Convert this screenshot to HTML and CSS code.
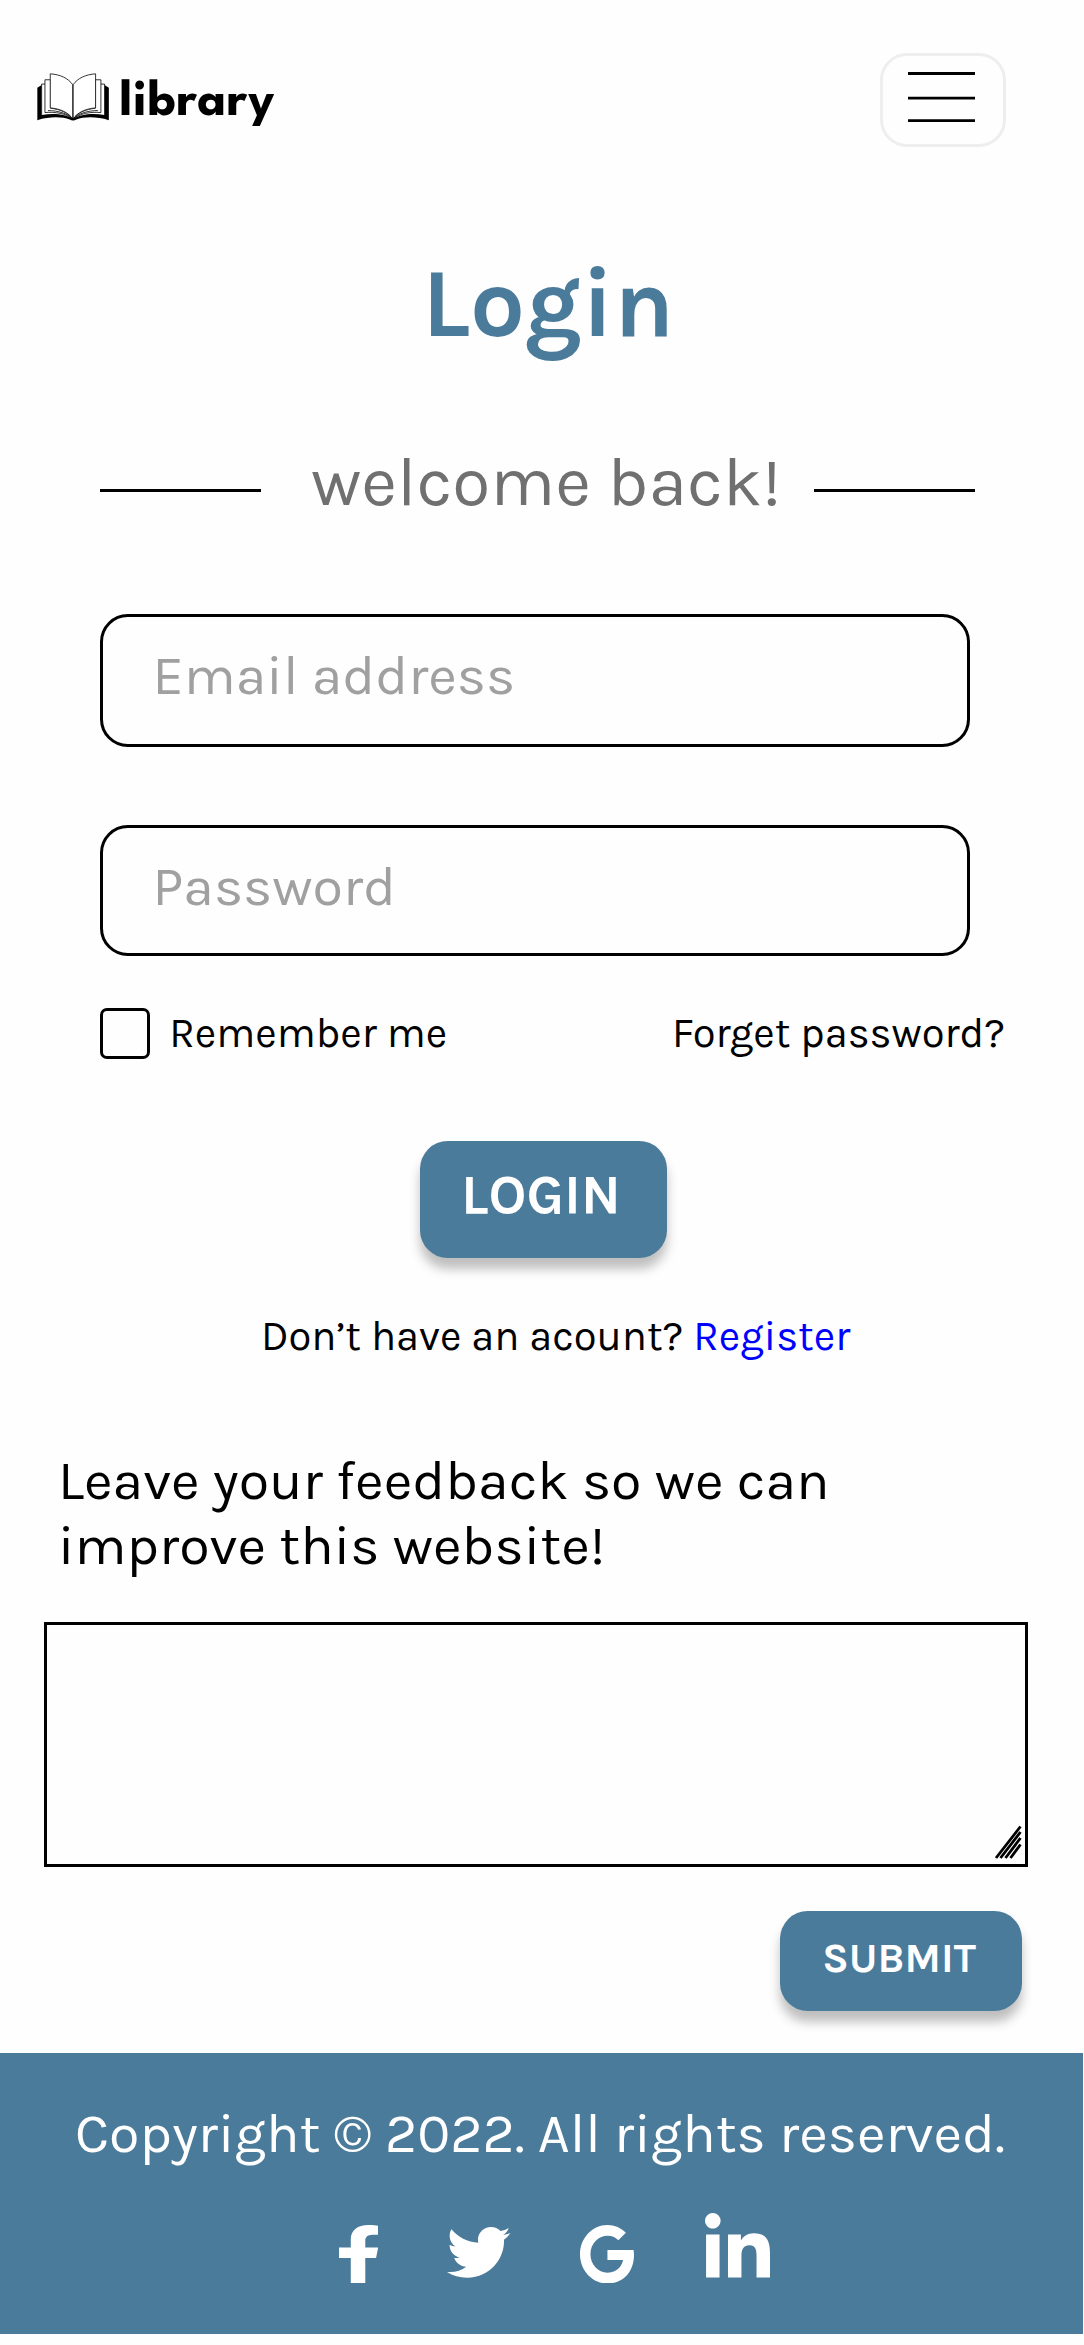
FILE: index.html
```html
<!DOCTYPE html>
<html lang="en">
<head>
<meta charset="utf-8">
<meta name="viewport" content="width=device-width">
<title>Library – Login</title>
<link rel="stylesheet" href="styles.css">
</head>
<body>
<header class="header">
  <a class="brand">
    <svg class="brand-icon" viewBox="20 24 219 144" fill="none" stroke="#000" stroke-width="2.4">
      <path fill="#000" stroke="none" d="M21 68l13-8v88c34-7 72-3 95 12 23-15 61-19 95-12V60l13 8v98c-38-12-77-10-98-2-6 4-14 4-20 0-21-8-60-10-98 2z"/>
      <path fill="#fff" stroke="none" d="M34 57h10v86c34-4 65 3 85 18 20-15 51-22 84-18V57h11v93c-36-6-73-3-95 12-22-15-59-18-95-12z"/>
      <path d="M34 150V57h10M224 150V57h-11"/>
      <path fill="#fff" d="M44 143V44h17v86c28 3 53 13 67 32-22-16-52-22-84-19zM213 143V44h-17v86c-28 3-53 13-67 32 22-16 52-22 84-19z"/>
      <path d="M53 137c31 0 60 9 75 25M204 137c-31 0-60 9-75 25"/>
      <path fill="#fff" d="M60 26c30 2 54 13 68 33v103c-12-18-37-31-68-33zM197 26c-30 2-54 13-68 33v103c12-18 37-31 68-33z"/>
    </svg>
    <span class="brand-name">library</span>
  </a>
  <button class="menu" aria-label="Menu"><svg width="68" height="54" viewBox="0 0 68 54" stroke="#000" stroke-width="2.8"><path d="M0 1.5h67M0 26.2h67M0 48.7h67"/></svg></button>
</header>
<main>
  <h1 class="title">Login</h1>
  <div class="welcome"><span class="rule"></span><p class="welcome-text">welcome back!</p><span class="rule"></span></div>
  <form class="login">
    <div class="field field-email">Email address</div>
    <div class="field field-password">Password</div>
    <div class="options">
      <span class="box"></span><span class="remember">Remember me</span><a class="forget">Forget password?</a>
    </div>
    <button type="button" class="button button-login">LOGIN</button>
    <p class="register">Don’t have an acount? <a class="register-link">Register</a></p>
  </form>
  <section class="feedback">
    <p class="feedback-label">Leave your feedback so we can<br>improve this website!</p>
    <div class="feedback-area">
      <svg class="grip" width="30" height="36" viewBox="0 0 30 36" stroke="#000" stroke-width="2.8"><path d="M3 34L27.500 2.500M7.500 34L27.500 8M12.500 34L27.500 14M17.500 34l10-13.500"/></svg>
    </div>
    <button type="button" class="button button-submit">SUBMIT</button>
  </section>
</main>
<footer class="footer">
  <p class="copyright">Copyright © 2022. All rights reserved.</p>
  <div class="social">
    <svg class="facebook" viewBox="22.9 0 274.2 512" preserveAspectRatio="none"><path d="M279.14 288l14.22-92.66h-88.91v-60.13c0-25.35 12.42-50.06 52.24-50.06h40.42V6.26S260.43 0 225.36 0c-73.22 0-121.08 44.38-121.08 124.72v70.62H22.89V288h81.39v224h100.17V288z"/></svg>
    <svg class="twitter" viewBox="0 48 512 416" preserveAspectRatio="none"><path d="M459.37 151.716c.325 4.548.325 9.097.325 13.645 0 138.72-105.583 298.558-298.558 298.558-59.452 0-114.68-17.219-161.137-47.106 8.447.974 16.568 1.299 25.34 1.299 49.055 0 94.213-16.568 130.274-44.832-46.132-.975-84.792-31.188-98.112-72.772 6.498.974 12.995 1.624 19.818 1.624 9.421 0 18.843-1.3 27.614-3.573-48.081-9.747-84.143-51.98-84.143-102.985v-1.299c13.969 7.797 30.214 12.67 47.431 13.319-28.264-18.843-46.781-51.005-46.781-87.391 0-19.492 5.197-37.36 14.294-52.954 51.655 63.675 129.3 105.258 216.365 109.807-1.624-7.797-2.599-15.918-2.599-24.04 0-57.828 46.782-104.934 104.934-104.934 30.213 0 57.502 12.67 76.67 33.137 23.715-4.548 46.456-13.32 66.599-25.34-7.798 24.366-24.366 44.833-46.132 57.827 21.117-2.273 41.584-8.122 60.426-16.243-14.292 20.791-32.161 39.308-52.628 54.253z"/></svg>
    <svg class="google" viewBox="0 8 488 496" preserveAspectRatio="none"><path d="M488 261.8C488 403.3 391.1 504 248 504 110.8 504 0 393.2 0 256S110.8 8 248 8c66.8 0 123 24.5 166.3 64.9l-67.5 64.9C258.5 52.6 94.3 116.6 94.3 256c0 86.5 69.1 156.6 153.7 156.6 98.2 0 135-70.4 140.8-106.9H248v-85.3h236.1c2.3 12.7 3.9 24.9 3.9 41.4z"/></svg>
    <svg class="linkedin" viewBox="0 0 448 448" preserveAspectRatio="none"><path d="M100.28 448H7.4V148.9h92.88zM53.79 108.1C24.09 108.1 0 83.5 0 53.8a53.79 53.79 0 0 1 107.58 0c0 29.7-24.1 54.3-53.79 54.3zM447.9 448h-92.68V302.4c0-34.7-.7-79.2-48.29-79.2-48.29 0-55.69 37.7-55.69 76.7V448h-92.78V148.9h89.08v40.8h1.3c12.4-23.5 42.69-48.3 87.88-48.3 94 0 111.28 61.9 111.28 142.3V448z"/></svg>
  </div>
</footer>
</body>
</html>
```
FILE: styles.css
```css
* { box-sizing: border-box; }
html { background: #fefefe; }
body {
  margin: 0;
  height: 2345px;
  overflow: hidden;
  font-family: Karla, "Open Sans", sans-serif;
  font-size: 41.7px;
  line-height: 49px;
  color: #000;
}
h1, p { margin: 0; font-weight: 400; white-space: nowrap; }
svg { display: block; flex: none; }
button { font-family: inherit; padding: 0; cursor: pointer; }

.header {
  display: flex;
  justify-content: space-between;
  align-items: flex-start;
  height: 247px;
  padding: 52.5px 78.5px 0 37px;
}
.brand { display: flex; padding-top: 20.5px; }
.brand-icon { width: 72.5px; height: 48px; }
.brand-name {
  margin: 4.5px 0 0 10px;
  font: 700 51px/49px "League Spartan", Lato, sans-serif;
  letter-spacing: .9px;
}
.menu {
  display: flex;
  justify-content: center;
  width: 126px;
  height: 94px;
  padding: 16px 1px 0 0;
  border: 3px solid #eee;
  border-radius: 27px;
  background: none;
}

.title {
  height: 195px;
  padding-left: 422px;
  font-size: 97.3px;
  line-height: 114px;
  font-weight: 700;
  color: #4b7b9b;
}
.welcome {
  display: flex;
  width: 875px;
  height: 172px;
  margin-left: 100px;
}
.rule { width: 161px; height: 3px; margin-top: 47px; background: #000; }
.rule:last-child { margin-left: auto; }
.welcome-text {
  margin: -1px 0 0 50px;
  font-size: 69.5px;
  line-height: 82px;
  color: #707070;
}

.login { display: flex; flex-direction: column; padding-left: 100px; }
.field {
  width: 870px;
  padding: 26px 49.5px;
  border: 3px solid #000;
  border-radius: 27.8px;
  font-size: 55.6px;
  line-height: 65px;
  color: #a0a0a0;
}
.field-email { height: 133px; margin-bottom: 78px; }
.field-password { height: 131px; }
.options { display: flex; width: 905px; margin-top: 51.5px; }
.box { width: 50px; height: 51px; border: 3px solid #000; border-radius: 7px; }
.remember { margin: 1px auto 0 19.3px; }
.forget { margin-top: 1px; }

.button {
  display: block;
  border: 0;
  border-radius: 27.8px;
  background: #4b7b9b;
  box-shadow: 0 11px 11px rgba(0, 0, 0, .25);
  color: #fff;
  font-weight: 700;
}
.button-login {
  width: 247px;
  height: 117px;
  margin: 82.5px 0 0 319.5px;
  padding: 0 4px 10px 0;
  font-size: 55.6px;
  line-height: 65px;
}
.register { margin: 54px 0 0 161px; }
.register-link { color: #00f; }

.feedback { padding: 88px 56px 0 44px; }
.feedback-label { padding-left: 14px; font-size: 55.6px; line-height: 64.5px; }
.feedback-area {
  position: relative;
  height: 245px;
  margin-top: 44px;
  border: 3px solid #000;
}
.grip { position: absolute; right: 2px; bottom: 4px; }
.button-submit {
  width: 242px;
  height: 100px;
  margin: 44px 6px 0 auto;
  padding: 0 4px 5px 0;
  font-size: 41.7px;
  line-height: 49px;
}

.footer {
  width: 1083px;
  height: 281px;
  margin-top: 41.5px;
  padding-top: 48px;
  background: #4b7b9b;
  color: #fff;
}
.copyright { padding-left: 75px; font-size: 55.6px; line-height: 65px; }
.social { display: flex; align-items: flex-start; padding: 47.5px 0 0 338.5px; fill: #fff; }
.facebook { width: 39.7px; height: 58.7px; margin-top: 11.5px; }
.twitter { width: 63.5px; height: 50.7px; margin: 14px 0 0 69.3px; }
.google { width: 54px; height: 58.5px; margin: 11.5px 0 0 69px; }
.linkedin { width: 65px; height: 64.5px; margin-left: 71px; }
```
